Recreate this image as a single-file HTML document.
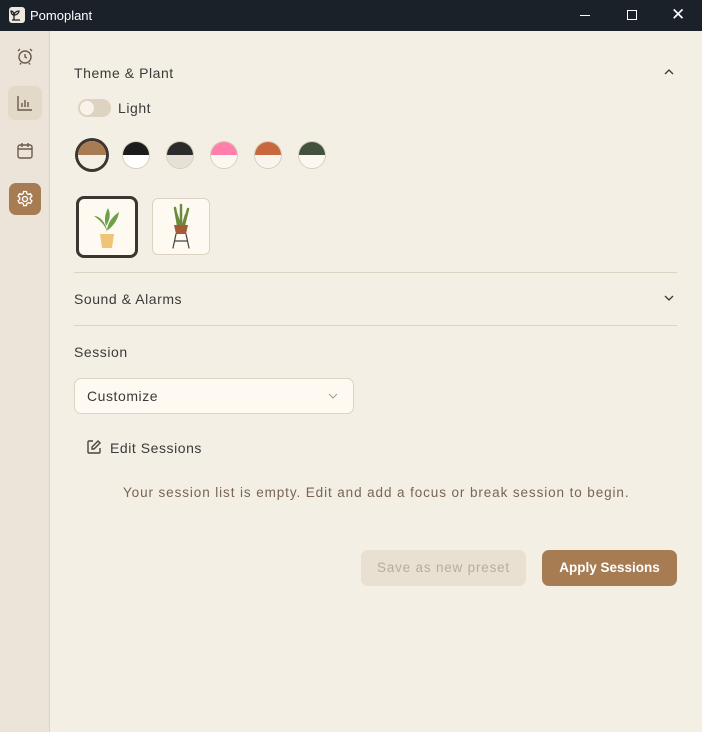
<!DOCTYPE html>
<html><head><style>
*{box-sizing:border-box;margin:0;padding:0}
body{width:702px;height:732px;overflow:hidden;background:#f4efe5;font-family:"Liberation Sans",sans-serif;color:#3d3530;position:relative}
.tb{position:absolute;left:0;top:0;width:702px;height:31px;background:#1a2129;color:#fff;font-size:13px}
.side{position:absolute;left:0;top:31px;width:50px;height:701px;background:#ece4d8;border-right:1px solid #ddd3c3}
.abs{position:absolute}
.h{font-size:14px;color:#3b3a3a;letter-spacing:0.55px}
.sw{position:absolute;top:141px;width:28px;height:28px;border-radius:50%;overflow:hidden;border:1px solid #d8cdbb}
.sw div{height:50%}
.line{position:absolute;left:74px;width:603px;height:1px;background:#ddd3c3}
</style></head><body>
<div class="tb">
 <div class="abs" style="left:9px;top:7px;width:16px;height:16px;background:#efe9dd;border-radius:3px"></div>
 <svg class="abs" style="left:9px;top:7px" width="16" height="16" viewBox="0 0 16 16" fill="none" stroke="#1a2129" stroke-width="1.3"><path d="M5 13V8M5 8C3 8 2 6 2 4c2 0 3 2 3 4zM5 8c0-2 2-4 5-4 0 2-2 4-5 4M3 13h8"/></svg>
 <span class="abs" style="left:30px;top:8px">Pomoplant</span>
 <div class="abs" style="left:580px;top:15px;width:10px;height:1px;background:#fff"></div>
 <div class="abs" style="left:627px;top:10px;width:10px;height:10px;border:1px solid #fff"></div>
 <span class="abs" style="left:671px;top:5px;font-size:17px">✕</span>
</div>
<div class="side">
 <svg class="abs" style="left:15px;top:15px" width="20" height="20" viewBox="0 0 20 20" fill="none" stroke="#6b5a4e" stroke-width="1.4"><circle cx="10" cy="11" r="6"/><path d="M10 8v3l2 1M3 5l2-2M17 5l-2-2M6 17l-1 1.5M14 17l1 1.5"/></svg>
 <div class="abs" style="left:8px;top:55px;width:34px;height:34px;border-radius:7px;background:#e3d9c9"></div>
 <svg class="abs" style="left:15px;top:62px" width="20" height="20" viewBox="0 0 20 20" fill="none" stroke="#6b5a4e" stroke-width="1.4"><path d="M3 3v14h14M7 14v-4M10 14V7M13 14v-5"/></svg>
 <svg class="abs" style="left:15px;top:110px" width="20" height="20" viewBox="0 0 20 20" fill="none" stroke="#6b5a4e" stroke-width="1.4"><rect x="3" y="4" width="14" height="13" rx="2"/><path d="M3 8h14M7 2v4M13 2v4"/></svg>
 <div class="abs" style="left:9px;top:152px;width:32px;height:32px;border-radius:7px;background:#a87c53"></div>
 <svg class="abs" style="left:15px;top:158px" width="20" height="20" viewBox="0 0 24 24" fill="none" stroke="#fff" stroke-width="1.6"><circle cx="12" cy="12" r="3"/><path d="M10.3 3h3.4l.5 2.5 2 1.1 2.4-.9 1.7 2.9-1.9 1.7v2.3l1.9 1.7-1.7 2.9-2.4-.9-2 1.1-.5 2.5h-3.4l-.5-2.5-2-1.1-2.4.9-1.7-2.9 1.9-1.7v-2.3L3.7 8.6l1.7-2.9 2.4.9 2-1.1z"/></svg>
</div>
<div class="abs h" style="left:74px;top:65px">Theme &amp; Plant</div>
<svg class="abs" style="left:663px;top:68px" width="12" height="8" viewBox="0 0 12 8" fill="none" stroke="#3d3530" stroke-width="1.3"><path d="M2 6l4-4 4 4"/></svg>
<div class="abs" style="left:78px;top:99px;width:33px;height:18px;border-radius:9px;background:#ddd3c0"></div>
<div class="abs" style="left:80px;top:101px;width:14px;height:14px;border-radius:50%;background:#f8f4ec"></div>
<div class="abs h" style="left:118px;top:100px">Light</div>
<div class="sw" style="left:78px;border:none;box-shadow:0 0 0 3px #3d3530"><div style="background:#a87c53"></div><div style="background:#f4efe5"></div></div>
<div class="sw" style="left:122px"><div style="background:#1c1c1c"></div><div style="background:#fff"></div></div>
<div class="sw" style="left:166px"><div style="background:#2b2b2b"></div><div style="background:#e6e1d7"></div></div>
<div class="sw" style="left:210px"><div style="background:#ff80ab"></div><div style="background:#fbf8f2"></div></div>
<div class="sw" style="left:254px"><div style="background:#c7693d"></div><div style="background:#f8f5ef"></div></div>
<div class="sw" style="left:298px"><div style="background:#43513f"></div><div style="background:#fbf8f2"></div></div>
<div class="abs" style="left:76px;top:196px;width:62px;height:62px;border:3px solid #3d3530;border-radius:8px;background:#fffaf1"></div>
<svg class="abs" style="left:90px;top:204px" width="34" height="46" viewBox="0 0 34 46"><path d="M17 28C15 20 8 15 4 12c6 0 11 6 13 14zM17 26c1-8 6-14 12-18-1 8-6 14-11 18zM16 22c-2-6-1-12 2-18 3 6 2 12-2 18z" fill="#6ea04a"/><path d="M10 30h14l-2 14h-10z" fill="#f0c477"/></svg>
<div class="abs" style="left:152px;top:198px;width:58px;height:57px;border:1px solid #ddd3c3;border-radius:6px;background:#fffaf1"></div>
<svg class="abs" style="left:166px;top:203px" width="30" height="47" viewBox="0 0 30 47" stroke-linecap="round"><path d="M12 22L9 5M15 22V2M18 22l4-16M14 22l-4-12M17 22l3-10" stroke="#6c8a3c" stroke-width="2.5"/><path d="M8 22h14l-2 9h-10z" fill="#a45a36"/><path d="M10 31l-3 14M20 31l3 14M9 38h12" stroke="#444" stroke-width="1.2" fill="none"/></svg>
<div class="line" style="top:272px"></div>
<div class="abs h" style="left:74px;top:291px">Sound &amp; Alarms</div>
<svg class="abs" style="left:663px;top:294px" width="12" height="8" viewBox="0 0 12 8" fill="none" stroke="#3d3530" stroke-width="1.3"><path d="M2 2l4 4 4-4"/></svg>
<div class="line" style="top:325px"></div>
<div class="abs h" style="left:74px;top:344px">Session</div>
<div class="abs" style="left:74px;top:378px;width:280px;height:36px;border:1px solid #ddd3c0;border-radius:7px;background:#fffaf1"></div>
<div class="abs h" style="left:87px;top:388px">Customize</div>
<svg class="abs" style="left:327px;top:392px" width="12" height="8" viewBox="0 0 12 8" fill="none" stroke="#a09a90" stroke-width="1"><path d="M2 2l4 4 4-4"/></svg>
<svg class="abs" style="left:86px;top:439px" width="16" height="16" viewBox="0 0 16 16" fill="none" stroke="#4a4240" stroke-width="1.4"><path d="M7 2H3a1 1 0 00-1 1v10a1 1 0 001 1h10a1 1 0 001-1V9M12 2l2 2-6 6H6V8z"/></svg>
<div class="abs h" style="left:110px;top:440px">Edit Sessions</div>
<div class="abs" style="left:123px;top:485px;font-size:13.5px;color:#7a6453;letter-spacing:0.9px;white-space:nowrap">Your session list is empty. Edit and add a focus or break session to begin.</div>
<div class="abs" style="left:361px;top:550px;width:165px;height:36px;border-radius:7px;background:#e9e0d2;color:#b8ad9e;font-size:13.5px;text-align:center;line-height:36px;letter-spacing:0.8px">Save as new preset</div>
<div class="abs" style="left:542px;top:550px;width:135px;height:36px;border-radius:7px;background:#a87c53;color:#fff;font-weight:bold;font-size:13.5px;text-align:center;line-height:36px">Apply Sessions</div>
</body></html>
